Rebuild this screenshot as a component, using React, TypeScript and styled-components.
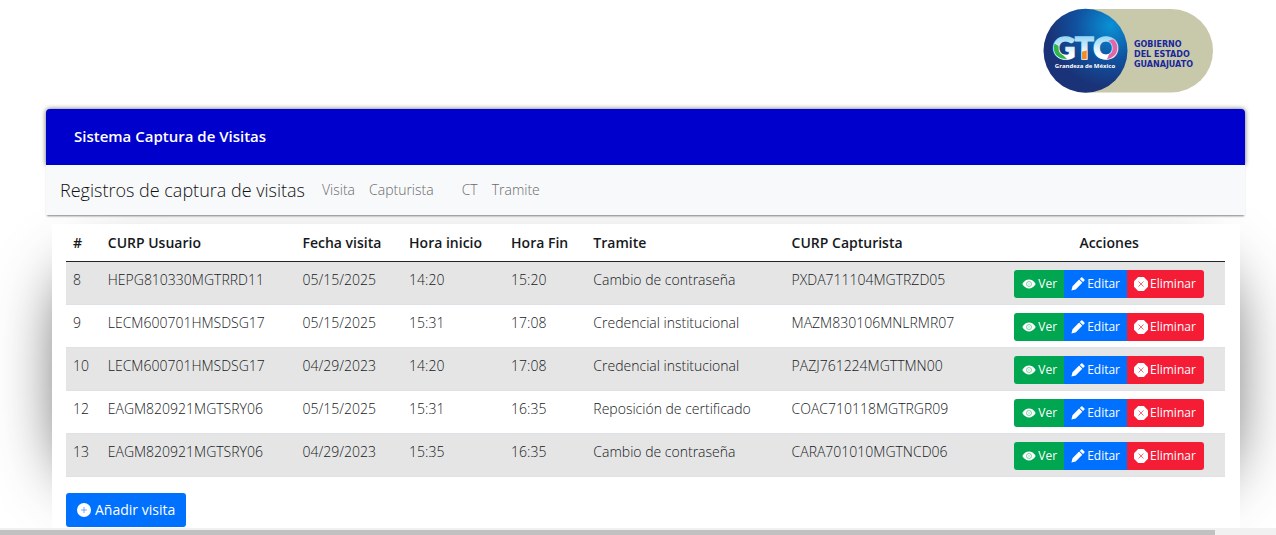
import React from 'react';
import styled, { createGlobalStyle } from 'styled-components';

const GlobalStyle = createGlobalStyle`
  *, *::before, *::after { box-sizing: border-box; }
  body { margin: 0; background: #fff; color: #16191c; font-family: "Open Sans", "Noto Sans", sans-serif; font-size: 14px; font-weight: 340; line-height: 20px; overflow: hidden; }
`;

const Page = styled.div`
  min-height: 100vh;
  display: flex;
  flex-direction: column;
`;

const Content = styled.div`
  flex: 1;
  display: flex;
  flex-direction: column;
  isolation: isolate;
  padding: 0 31px 0 46px;
`;

const Banner = styled.header`
  display: flex;
  justify-content: flex-end;
  padding: 8px 32px 16px 0;
`;

const TitleBar = styled.div`
  background: #0000cd;
  color: #fff;
  border-radius: 4px 4px 0 0;
  box-shadow: 0 0 5px rgba(0, 0, 0, 0.6);
  padding: 15px 28px 17px;
`;

const Title = styled.h1`
  margin: 0;
  font-size: 15px;
  line-height: 24px;
  font-weight: 650;
`;

const Nav = styled.nav`
  position: relative;
  z-index: 1;
  display: flex;
  align-items: center;
  gap: 14px;
  height: 50px;
  padding: 0 14px;
  background: #f8f9fb;
  box-shadow: 0 2px 2px -1px rgba(0, 0, 0, 0.5);
`;

const Brand = styled.a`
  margin-right: 3px;
  color: #111;
  font-size: 18px;
  font-weight: 300;
  text-decoration: none;
`;

const NavLink = styled.a<{ $spaced?: boolean }>`
  margin-left: ${(p) => (p.$spaced ? '14px' : '0')};
  color: #6a6a6a;
  text-decoration: none;
`;

const Card = styled.main`
  position: relative;
  flex: 1;
  margin: 9px 5px 0 6px;
  padding: 0 15px 1px 14px;
  background: #fff;
`;

/* Soft glow that is shorter than the card, so it fades towards the corners. */
const CardGlow = styled.div`
  position: absolute;
  z-index: -1;
  inset: 272px 52px 57px 68px;
  border-radius: 40px;
  box-shadow: 0 0 68px rgba(0, 0, 0, 0.8);
`;

const Table = styled.table`
  width: 100%;
  border-collapse: collapse;
  table-layout: fixed;
`;

const Col = styled.col<{ $share: number }>`
  width: ${(p) => p.$share}%;
`;

const Th = styled.th<{ $center?: boolean }>`
  height: 37px;
  padding: 2px 7px 0;
  border-bottom: 1px solid #212529;
  font-weight: 650;
  text-align: ${(p) => (p.$center ? 'center' : 'left')};
`;

const Row = styled.tr`
  border-bottom: 1px solid #dee2e6;
  &:nth-child(odd) { background: #e5e5e5; }
`;

const Td = styled.td`
  padding: 8px 7px 6px;
  vertical-align: top;
  white-space: nowrap;
`;

const Actions = styled.div`
  display: flex;
  justify-content: center;
`;

const ActionButton = styled.button<{ $tone: string }>`
  display: flex;
  align-items: center;
  gap: 2px;
  height: 28px;
  padding: 0 7px;
  border: 0;
  background: ${(p) => p.$tone};
  color: #fff;
  font: inherit;
  font-size: 12px;
  font-weight: 400;
  &:first-child { padding-left: 8px; border-radius: 3px 0 0 3px; }
  &:last-child { padding-right: 8px; border-radius: 0 3px 3px 0; }
`;

const AddButton = styled.button`
  display: flex;
  align-items: center;
  gap: 4px;
  height: 34px;
  margin-top: 16px;
  padding: 0 11px;
  border: 0;
  border-radius: 3px;
  background: #0070ff;
  color: #fff;
  font: inherit;
  font-weight: 400;
`;

const ScrollTrack = styled.div`
  position: relative;
  z-index: 1;
  height: 7px;
  padding-top: 2px;
  background: #f1f1f1;
`;

const ScrollThumb = styled.div`
  width: 95.2%;
  height: 5px;
  background: #c1c1c1;
`;

const Eye = () => (
  <svg width="14" height="14" viewBox="0 0 14 14" aria-hidden="true">
    <path d="M.3 7C2 3.900 4.500 2.600 7 2.600S12 3.900 13.700 7C12 10.100 9.500 11.400 7 11.400S2 10.100 .3 7Z" fill="#fff" />
    <circle cx="7" cy="7" r="2.500" fill="none" stroke="#00a650" strokeOpacity=".5" />
    <circle cx="7" cy="7" r="1" fill="#00a650" fillOpacity=".25" />
  </svg>
);

const Pencil = () => (
  <svg width="14" height="14" viewBox="0 0 14 14" aria-hidden="true">
    <path d="M10.200.4Q10.800 0 11.400.5L13.400 2.500Q13.900 3.100 13.400 3.700L12 5.100 8.800 1.900ZM8.100 2.600 11.300 5.800 4.700 12.400.4 13.600 1.500 9.200Z" fill="#fff" />
  </svg>
);

const CrossCircle = () => (
  <svg width="14" height="14" viewBox="0 0 14 14" aria-hidden="true">
    <path d="M4.200 0H9.800L14 4.200V9.800L9.800 14H4.200L0 9.800V4.200Z" fill="#fff" />
    <path d="m4.500 4.500 5 5m0-5-5 5" stroke="#f51d36" strokeOpacity=".65" />
  </svg>
);

const PlusCircle = () => (
  <svg width="14" height="14" viewBox="0 0 14 14" aria-hidden="true">
    <circle cx="7" cy="7" r="7" fill="#fff" />
    <path d="M7 4v6M4 7h6" stroke="#0070ff" strokeOpacity=".55" />
  </svg>
);

const Logo = () => (
  <svg width="170" height="85" viewBox="0 0 170 85" role="img" aria-label="GTO Gobierno del Estado Guanajuato">
    <defs>
      <radialGradient id="disc" cx=".8" cy=".2" r=".75">
        <stop offset="0" stopColor="#0a91d5" />
        <stop offset=".55" stopColor="#10519f" />
        <stop offset="1" stopColor="#1a3277" />
      </radialGradient>
      <linearGradient id="letters" x2="0" y2="1">
        <stop offset=".2" stopColor="#8fd5f5" />
        <stop offset=".7" stopColor="#fff" />
      </linearGradient>
      <clipPath id="letterShape">
        <text x="42.500" y="51" textAnchor="middle" fontFamily="Lato" fontSize="31" fontWeight="900" stroke="#fff">GTO</text>
      </clipPath>
    </defs>
    <rect x="2" y="1" width="168" height="83.500" rx="41.700" fill="#c8c8aa" />
    <circle cx="42.500" cy="42.700" r="42" fill="url(#disc)" />
    <text x="42.500" y="51" textAnchor="middle" fill="url(#letters)" stroke="url(#letters)" strokeWidth="1.500" fontFamily="Lato" fontSize="31" fontWeight="900">GTO</text>
    <g clipPath="url(#letterShape)">
      <path d="M8 35Q18 36 17 44L27 54H8Z" fill="#31b44b" />
      <path d="M38 44 49 41V54H38Z" fill="#f58a1f" />
      <path d="M65 33Q77 27 80 38V56H59Q70 48 65 33Z" fill="#df67a7" />
    </g>
    <text x="42" y="60" textAnchor="middle" fill="#fff" fontFamily="Open Sans" fontSize="6" fontWeight="700">Grandeza de México</text>
    <g fill="#19279b" fontFamily="DejaVu Sans" fontSize="8" fontWeight="700">
      <text x="91" y="39">GOBIERNO</text>
      <text x="91" y="49">DEL ESTADO</text>
      <text x="91" y="59">GUANAJUATO</text>
    </g>
  </svg>
);

const columns = [
  { label: '#', share: 3 },
  { label: 'CURP Usuario', share: 16.8 },
  { label: 'Fecha visita', share: 9.2 },
  { label: 'Hora inicio', share: 8.8 },
  { label: 'Hora Fin', share: 7.1 },
  { label: 'Tramite', share: 17.1 },
  { label: 'CURP Capturista', share: 18 },
  { label: 'Acciones', share: 20 },
];

const visits = [
  ['8', 'HEPG810330MGTRRD11', '05/15/2025', '14:20', '15:20', 'Cambio de contraseña', 'PXDA711104MGTRZD05'],
  ['9', 'LECM600701HMSDSG17', '05/15/2025', '15:31', '17:08', 'Credencial institucional', 'MAZM830106MNLRMR07'],
  ['10', 'LECM600701HMSDSG17', '04/29/2023', '14:20', '17:08', 'Credencial institucional', 'PAZJ761224MGTTMN00'],
  ['12', 'EAGM820921MGTSRY06', '05/15/2025', '15:31', '16:35', 'Reposición de certificado', 'COAC710118MGTRGR09'],
  ['13', 'EAGM820921MGTSRY06', '04/29/2023', '15:35', '16:35', 'Cambio de contraseña', 'CARA701010MGTNCD06'],
];

export default function App() {
  return (
    <Page>
      <GlobalStyle />
      <Content>
        <Banner><Logo /></Banner>
        <TitleBar><Title>Sistema Captura de Visitas</Title></TitleBar>
        <Nav>
          <Brand href="#">Registros de captura de visitas</Brand>
          <NavLink href="#">Visita</NavLink>
          <NavLink href="#">Capturista</NavLink>
          <NavLink href="#" $spaced>CT</NavLink>
          <NavLink href="#">Tramite</NavLink>
        </Nav>
        <CardGlow />
        <Card>
          <Table>
            <colgroup>{columns.map((c) => <Col key={c.label} $share={c.share} />)}</colgroup>
            <thead>
              <tr>{columns.map((c) => <Th key={c.label} scope="col" $center={c.label === 'Acciones'}>{c.label}</Th>)}</tr>
            </thead>
            <tbody>
              {visits.map((visit) => (
                <Row key={visit[0]}>
                  {visit.map((value, i) => <Td key={i}>{value}</Td>)}
                  <Td>
                    <Actions>
                      <ActionButton type="button" $tone="#00a650"><Eye />Ver</ActionButton>
                      <ActionButton type="button" $tone="#0070ff"><Pencil />Editar</ActionButton>
                      <ActionButton type="button" $tone="#f51d36"><CrossCircle />Eliminar</ActionButton>
                    </Actions>
                  </Td>
                </Row>
              ))}
            </tbody>
          </Table>
          <AddButton type="button"><PlusCircle />Añadir visita</AddButton>
        </Card>
      </Content>
      <ScrollTrack><ScrollThumb /></ScrollTrack>
    </Page>
  );
}
